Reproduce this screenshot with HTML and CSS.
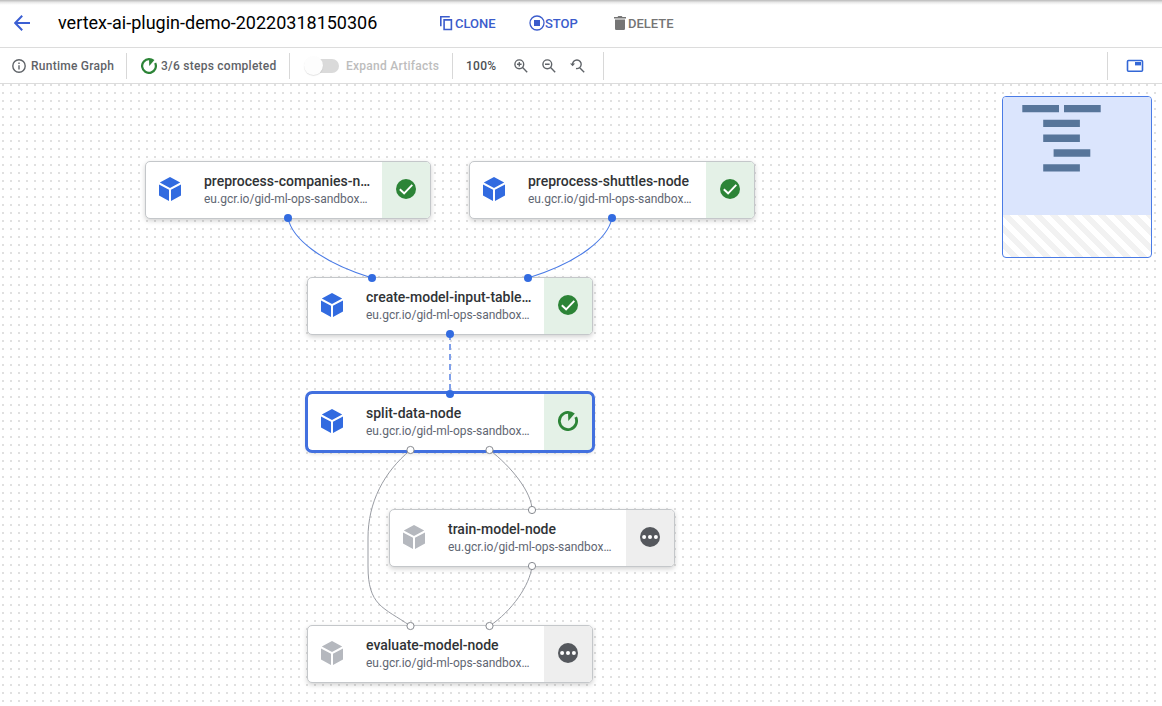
FILE: index.html
```html
<!DOCTYPE html>
<html lang="en">
<head>
<meta charset="utf-8">
<title>vertex-ai-plugin-demo-20220318150306</title>
<link rel="stylesheet" href="styles.css">
</head>
<body>
<svg class="defs" width="0" height="0" aria-hidden="true">
  <symbol id="cube" viewBox="0 0 22 24"><path d="M11 0l10.2 5.6L11 11.1.8 5.6zM0 7.4l10 5.4V24L0 18.5zM22 7.4l-10 5.4V24l10-5.5z"/></symbol>
  <symbol id="done" viewBox="0 0 20 20"><circle cx="10" cy="10" r="10"/><path d="M3.8 10.2l4.3 4.1 8.2-8.5" fill="none" stroke="#fff" stroke-width="1.9"/></symbol>
  <symbol id="running" viewBox="0 0 20 20"><path d="M10.200 1.400A8.600 8.600 0 1 0 17.700 6.200" fill="none" stroke="currentColor" stroke-width="2.800"/><path d="M10 0Q13.800 .2 16.800 2.500L10.300 10z"/></symbol>
  <symbol id="pending" viewBox="0 0 20 20"><circle cx="10" cy="10" r="10"/><g fill="#fff"><circle cx="4.1" cy="10" r="2"/><circle cx="10" cy="10" r="2"/><circle cx="15.9" cy="10" r="2"/></g></symbol>
</svg>

<header class="header">
  <svg class="back" width="16" height="16" viewBox="0 0 16 16"><path d="M16 8H1.5M8.2 .8L1.2 8l7 7.2"/></svg>
  <h1 class="title">vertex-ai-plugin-demo-20220318150306</h1>
  <button class="action clone"><svg width="13" height="15" viewBox="0 0 13 15"><path d="M.8 10.2V.8h9M4.1 3.9h7.3v9.6H4.1z"/></svg><span>CLONE</span></button>
  <button class="action stop"><svg width="16" height="16" viewBox="0 0 16 16"><circle cx="8" cy="8" r="7"/><path class="solid" d="M5 5h6v6H5z"/></svg><span>STOP</span></button>
  <button class="action delete"><svg width="12" height="14" viewBox="0 0 12 14"><path class="solid" d="M0 .9h3.5L4.3 0h3.4l.8.9H12v1.6H0zM1 3.6h10v8.8c0 .9-.7 1.6-1.6 1.6H2.6c-.9 0-1.6-.7-1.6-1.6z"/></svg><span>DELETE</span></button>
</header>

<nav class="toolbar">
  <div class="group runtime"><svg width="14" height="14" viewBox="0 0 14 14"><circle cx="7" cy="7" r="6.2"/><path d="M7 6.2v4.2M7 3.5V5"/></svg><span>Runtime Graph</span></div>
  <div class="group steps"><svg width="16" height="16"><use href="#running"/></svg><span>3/6 steps completed</span></div>
  <div class="group artifacts"><i class="switch"></i><span>Expand Artifacts</span></div>
  <div class="group zoom">
    <span>100%</span>
    <svg width="14" height="14" viewBox="0 0 14 14"><circle cx="5.3" cy="5.3" r="4.4"/><path d="M8.6 8.6l4.6 4.6M3 5.3h4.6M5.3 3v4.6"/></svg>
    <svg width="14" height="14" viewBox="0 0 14 14"><circle cx="5.3" cy="5.3" r="4.4"/><path d="M8.6 8.6l4.6 4.6M3 5.3h4.6"/></svg>
    <svg class="reset" width="15" height="14" viewBox="0 0 15 14"><path d="M2.6 5.6A4.3 4.3 0 1 1 6 9.5M9.7 8.8l4.5 4.4"/><path class="solid" d="M0 4.4h5.1L2.6 7.3z"/></svg>
  </div>
  <div class="group minimap-toggle"><svg width="18" height="14" viewBox="0 0 18 14"><rect x="1.5" y="1.5" width="15" height="10.8" rx="1"/><path class="solid" d="M9 3h6v3.4H9z"/></svg></div>
</nav>

<main class="canvas">
  <article class="node" style="left:145px;top:77px"><svg class="cube"><use href="#cube"/></svg><div class="text"><h2>preprocess-companies-n…</h2><p>eu.gcr.io/gid-ml-ops-sandbox…</p></div><div class="status"><svg><use href="#done"/></svg></div></article>
  <article class="node" style="left:469px;top:77px"><svg class="cube"><use href="#cube"/></svg><div class="text"><h2>preprocess-shuttles-node</h2><p>eu.gcr.io/gid-ml-ops-sandbox…</p></div><div class="status"><svg><use href="#done"/></svg></div></article>
  <article class="node" style="left:307px;top:193px"><svg class="cube"><use href="#cube"/></svg><div class="text"><h2>create-model-input-table…</h2><p>eu.gcr.io/gid-ml-ops-sandbox…</p></div><div class="status"><svg><use href="#done"/></svg></div></article>
  <article class="node selected" style="left:307px;top:309px"><svg class="cube"><use href="#cube"/></svg><div class="text"><h2>split-data-node</h2><p>eu.gcr.io/gid-ml-ops-sandbox…</p></div><div class="status"><svg><use href="#running"/></svg></div></article>
  <article class="node idle" style="left:389px;top:425px"><svg class="cube"><use href="#cube"/></svg><div class="text"><h2>train-model-node</h2><p>eu.gcr.io/gid-ml-ops-sandbox…</p></div><div class="status"><svg><use href="#pending"/></svg></div></article>
  <article class="node idle" style="left:307px;top:541px"><svg class="cube"><use href="#cube"/></svg><div class="text"><h2>evaluate-model-node</h2><p>eu.gcr.io/gid-ml-ops-sandbox…</p></div><div class="status"><svg><use href="#pending"/></svg></div></article>

  <svg class="edges" viewBox="0 84 1162 622">
    <g class="active">
      <path d="M288 218C292 238 320 262 372 278"/>
      <path d="M612 218C608 238 580 262 528 278"/>
      <path class="dashed" d="M450 334V394"/>
      <circle cx="288" cy="218" r="4"/><circle cx="372" cy="278" r="4"/><circle cx="612" cy="218" r="4"/><circle cx="528" cy="278" r="4"/><circle cx="450" cy="334" r="4"/><circle cx="450" cy="394" r="4"/>
    </g>
    <g class="waiting">
      <path d="M410.500 450C384 472 368 502 368 538V566C368 606 383 607 410.500 626"/>
      <path d="M489.500 450C512 467 532 493 532 510"/>
      <path d="M532 566C530 585 512 611 489.500 626"/>
      <circle cx="410.500" cy="450" r="3.600"/><circle cx="489.500" cy="450" r="3.600"/><circle cx="532" cy="510" r="3.600"/><circle cx="532" cy="566" r="3.600"/><circle cx="410.500" cy="626" r="3.600"/><circle cx="489.500" cy="626" r="3.600"/>
    </g>
  </svg>

  <aside class="minimap">
    <svg width="148" height="118" viewBox="1003 97 148 118"><path d="M1022.300 104.900h36.700v7.400h-36.700zM1064 104.900h36.700v7.400H1064zM1043.200 119.700h36.700v7.400h-36.700zM1043.200 134.500h36.700v7.400h-36.700zM1053.600 149.300h36.700v7.400h-36.700zM1043.200 164.200h36.700v7.400h-36.700z"/></svg>
  </aside>
</main>
</body>
</html>
```
FILE: styles.css
```css
* { box-sizing: border-box; }
body { margin: 0; width: 1162px; height: 706px; overflow: hidden; background: #fff; font-family: Roboto, "Liberation Sans", sans-serif; }
svg { display: block; flex: none; }
.defs { position: absolute; }
h1, h2, p { margin: 0; white-space: nowrap; }

.header { height: 48px; display: flex; align-items: center; padding: 0 0 1px 14px; border-bottom: 1px solid #dcdcdc; background: linear-gradient(#bdbdbd 0, #c9c9c9 1px, #e5e5e5 2px, #f8f8f8 4px, #fff 5px); }
.back { fill: none; stroke: #3b5fd3; stroke-width: 2; }
.title { width: 320px; margin-left: 28px; font-size: 18px; font-weight: 400; line-height: 24px; color: #000; }
.action { display: flex; align-items: center; gap: 2px; padding: 0; border: 0; background: none; font: 500 13px/20px Roboto, sans-serif; color: #3b5ccc; }
.action span { padding-top: 1px; }
.action svg { fill: none; stroke: currentColor; stroke-width: 1.6; }
.action .solid { fill: currentColor; stroke: none; }
.clone { width: 89px; margin-left: 62px; }
.stop { width: 85px; gap: 0; }
.stop svg { stroke-width: 1.3; }
.delete { color: #757575; }

.toolbar { height: 36px; display: flex; align-items: center; border-bottom: 1px solid #dcdcdc; font-size: 12px; letter-spacing: .25px; font-weight: 500; color: #5f6368; white-space: nowrap; }
.group { display: flex; align-items: center; height: 26px; border-right: 1px solid #d8d8d8; }
.group svg { fill: none; stroke: #5f6368; stroke-width: 1.4; }
.group .solid { fill: #5f6368; stroke: none; }
.runtime { width: 127px; padding-left: 12px; gap: 5px; }
.steps { width: 163px; padding-left: 14px; gap: 4px; }
.steps svg { color: #2c8437; fill: #2c8437; stroke: none; }
.artifacts { width: 163px; padding-left: 14px; color: #bdbdbd; }
.artifacts span { margin-left: 7px; padding-top: 1px; }
.switch { width: 35px; height: 20px; display: flex; align-items: center; }
.switch::before { content: ""; width: 19px; height: 19px; margin-right: -10px; border-radius: 50%; background: #fdfdfd; box-shadow: 0 1px 1px #0000001c; z-index: 1; }
.switch::after { content: ""; width: 26px; height: 14px; border-radius: 0 7px 7px 0; background: #dadada; }
.zoom { width: 151px; height: 28px; padding-left: 13px; color: #4b4f54; }
.zoom span { width: 48px; }
.zoom svg { margin-right: 14px; }
.minimap-toggle { margin-left: auto; width: 55px; height: 28px; padding-left: 18px; border: 0; border-left: 1px solid #d8d8d8; }
.minimap-toggle svg { stroke: #3367d6; stroke-width: 1.6; }
.minimap-toggle .solid { fill: #3367d6; }

.canvas { position: relative; height: 622px; background: conic-gradient(from 90deg at 6px 6px, #e0e0e0 25%, #fff 0) -4px -6px / 8px 8px; }
.node { position: absolute; display: flex; align-items: center; width: 286px; height: 58px; padding-left: 13px; border: 1px solid #c4c7ca; border-radius: 5px; background: #fff; box-shadow: 0 2px 5px #0000002e; overflow: hidden; }
.cube { width: 22px; height: 24px; margin-bottom: 2px; fill: #326be0; }
.text { width: 178px; margin-left: 23px; }
.node h2 { margin-top: -2px; padding-bottom: 1px; font-size: 14px; font-weight: 500; line-height: 18px; color: #303336; }
.node p { font-size: 12px; line-height: 16px; color: #5f6672; }
.status { display: flex; align-items: center; justify-content: center; width: 48px; height: 56px; padding-bottom: 2px; background: #e4f1e7; color: #2c8437; fill: currentColor; }
.status svg { width: 20px; height: 20px; }
.selected { outline: 3px solid #4270df; outline-offset: -1px; border-color: #4270df; }
.idle .cube { fill: #b5b8be; }
.idle .status { background: #eee; color: #55585d; }

.edges { position: absolute; inset: 0; width: 1162px; height: 622px; fill: none; }
.active path { stroke: #4a7be6; stroke-width: 1.1; }
.active .dashed { stroke: #7fa0eb; stroke-width: 2; stroke-dasharray: 6 4; }
.active circle { fill: #326be0; }
.waiting path { stroke: #999ca3; stroke-width: 1; }
.waiting circle { fill: #fff; stroke: #878a90; stroke-width: 1; }

.minimap { position: absolute; left: 1002px; top: 12px; width: 150px; height: 162px; border: 1px solid #4a7be6; border-radius: 4px; overflow: hidden; background: linear-gradient(45deg, #fff 25%, #f2f2f2 25% 50%, #fff 50% 75%, #f2f2f2 75%) 0 0 / 16px 16px; }
.minimap svg { background: #dbe5fd; fill: #57759a; }
```
